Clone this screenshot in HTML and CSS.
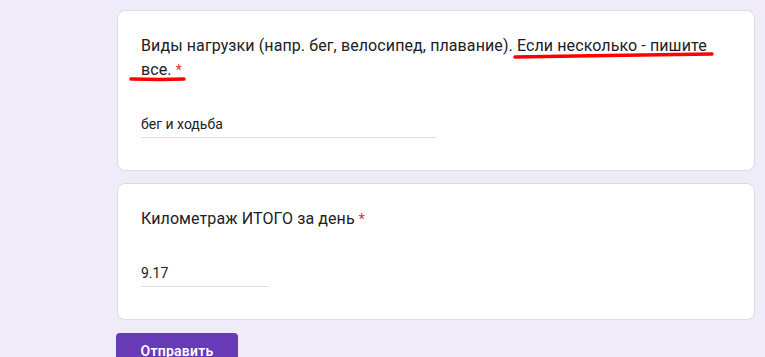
FILE: index.html
```html
<!DOCTYPE html>
<html>

<head>
    <title>Форма</title>
    <meta charset="utf-8">
    <link rel="stylesheet" href="styles.css">
</head>

<body>
    <div class="form-wrap">
        <div class="question">
            <div class="q-title">Виды нагрузки (напр. бег, велосипед, плавание). Если несколько - пишите все. <span class="req">*</span></div>
            <div class="q-answer q-long">бег и ходьба</div>
        </div>
        <div class="question">
            <div class="q-title">Километраж ИТОГО за день <span class="req">*</span></div>
            <div class="q-answer q-short">9.17</div>
        </div>
        <button class="send">Отправить</button>
    </div>

    <svg class="marks" width="765" height="357" viewBox="0 0 765 357">
        <path d="M515 57 C 580 56, 650 55, 712 54" />
        <path d="M131 79 C 150 79.5, 170 79.5, 184 79" />
    </svg>
</body>

</html>
```

FILE: styles.css
```css
body {
    margin: 0;
    background: #f0ebf8;
    font-family: Roboto, "Noto Sans", Arial, sans-serif;
    color: #202124;
    overflow: hidden;
}

.form-wrap {
    padding: 10px 0 0 117px;
    width: 638px;
}

/* question cards */

.question {
    background: #fff;
    border: 1px solid #dadce0;
    border-radius: 8px;
    padding: 23px 24px 32px 23px;
    margin-bottom: 12px;
}

.q-title {
    font-size: 16px;
    line-height: 24px;
    letter-spacing: 0.1px;
}

.req {
    color: #d93025;
    font-size: 14px;
    line-height: 0;
}

.q-answer {
    margin-top: 32px;
    font-size: 14px;
    line-height: 20px;
    padding-bottom: 3px;
    border-bottom: 1px solid #e0e0e0;
}

.q-long {
    width: 295px;
}

.q-short {
    width: 128px;
}

/* submit */

.send {
    margin-top: 1px;
    margin-left: -1px;
    height: 36px;
    width: 122px;
    border: 0;
    border-radius: 4px;
    background: #673ab7;
    color: #fff;
    font-family: Roboto, Arial, sans-serif;
    font-size: 14px;
    font-weight: 600;
    letter-spacing: 0.25px;
}

/* marker annotation */

.marks {
    position: absolute;
    left: 0;
    top: 0;
    pointer-events: none;
}

.marks path {
    fill: none;
    stroke: #f00;
    stroke-width: 3.5;
    stroke-linecap: round;
}
```
